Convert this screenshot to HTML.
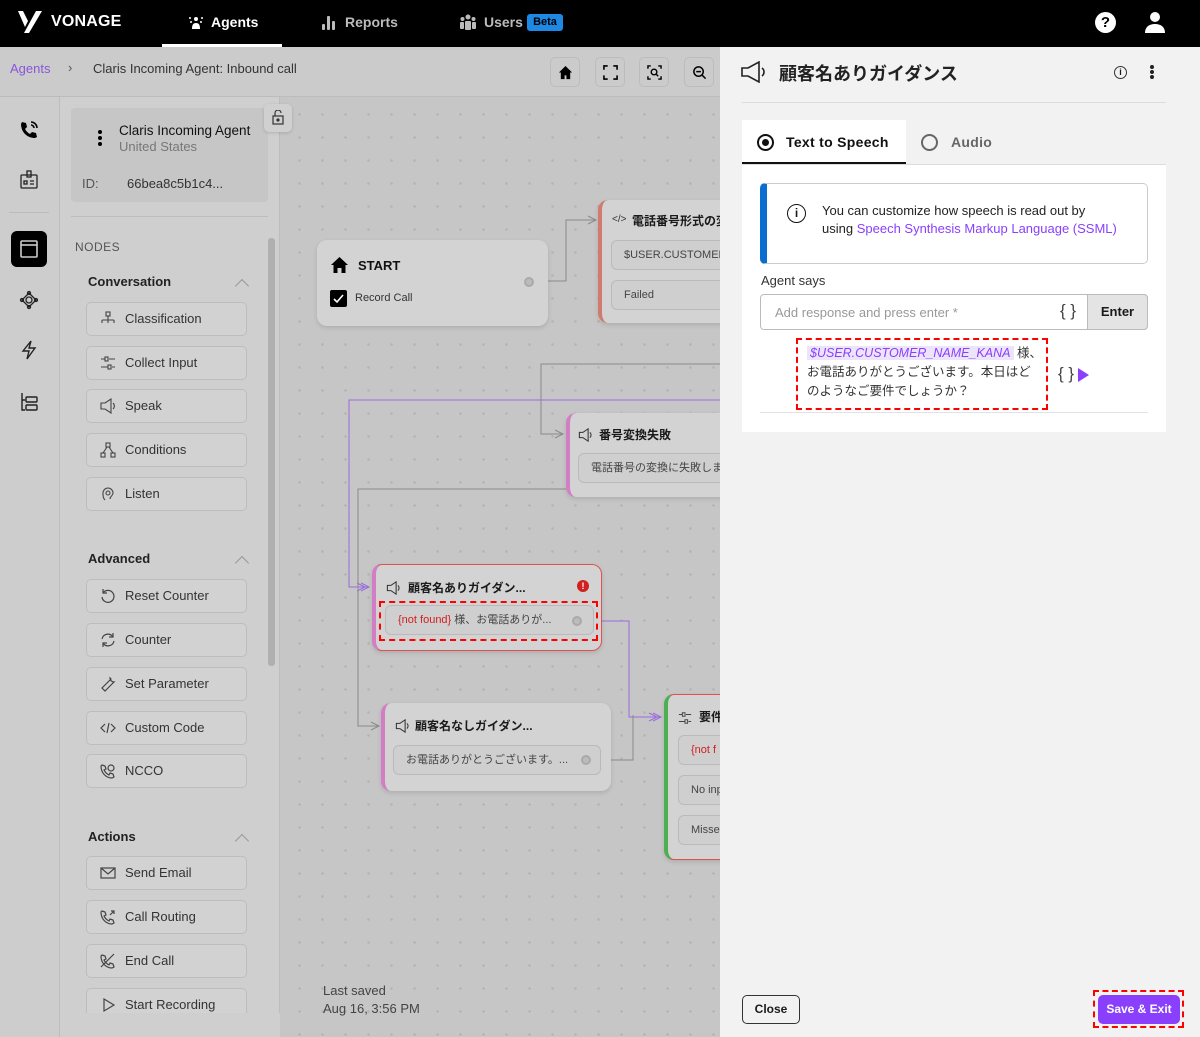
<!DOCTYPE html>
<html><head><meta charset="utf-8">
<style>
*{box-sizing:border-box;margin:0;padding:0}
body{width:1200px;height:1037px;overflow:hidden;position:relative;font-family:"Liberation Sans","Noto Sans CJK JP",sans-serif;background:#c6c6c6;color:#1a1a1a}
.a{position:absolute}
.hdr{left:0;top:0;width:1200px;height:47px;background:#000;color:#fff}
.bc{left:0;top:47px;width:720px;height:50px;background:#cbcbcb;border-bottom:1px solid #bcbcbc}
.rail{left:0;top:97px;width:60px;height:940px;background:#cdcdcd;border-right:1px solid #bdbdbd}
.side{left:60px;top:97px;width:220px;height:940px;background:#cfcfcf;border-right:1px solid #bdbdbd}
.canvas{left:280px;top:97px;width:440px;height:940px;background-color:#c6c6c6;background-image:radial-gradient(circle,#b2b2b2 1px,transparent 1.5px);background-size:23px 23px;background-position:8px 6px}
.nb{position:absolute;left:86px;width:161px;height:34px;border:1px solid #bdbdbd;border-radius:5px;background:#d2d2d2;font-size:13px;color:#333;padding-left:38px;line-height:32px}
.nb svg{position:absolute;left:13px;top:8px}
.sh{position:absolute;left:88px;font-size:13px;font-weight:bold;color:#222}
.chev{position:absolute;left:237px;width:10px;height:10px;border-left:1.5px solid #999;border-top:1.5px solid #999;transform:rotate(45deg)}
.node{position:absolute;background:#d3d3d3;border-radius:10px;box-shadow:0 2px 5px rgba(0,0,0,.12)}
.pill{position:absolute;background:#cfcfcf;border:1px solid #bababa;border-radius:6px;font-size:11px;color:#444;padding-left:12px;white-space:nowrap;overflow:hidden}
.tb{position:absolute;top:57px;width:30px;height:30px;border:1px solid #bcbcbc;border-radius:5px;background:#cbcbcb}
.panel{left:720px;top:47px;width:480px;height:990px;background:#f2f2f2}
</style></head><body>

<div class="a hdr">
  <svg class="a" style="left:17px;top:10px" width="26" height="24" viewBox="0 0 26 24"><path d="M1 1h5l5 10-3 6z" fill="#fff"/><path d="M19 1h6L12 23H7z" fill="#fff"/></svg>
  <div class="a" style="left:51px;top:13px;font-size:16px;font-weight:bold;letter-spacing:.2px">VONAGE</div>
  <svg class="a" style="left:188px;top:14px" width="16" height="16" viewBox="0 0 16 16" fill="#fff"><circle cx="8" cy="5" r="2"/><path d="M4 15c0-4 1-6 4-6s4 2 4 6z"/><circle cx="2" cy="4" r="1"/><circle cx="14" cy="4" r="1"/><circle cx="3" cy="8" r="1"/><circle cx="13" cy="8" r="1"/></svg>
  <div class="a" style="left:211px;top:14px;font-size:14px;font-weight:bold">Agents</div>
  <div class="a" style="left:162px;top:44px;width:120px;height:3px;background:#fff"></div>
  <svg class="a" style="left:321px;top:14px" width="16" height="16" viewBox="0 0 16 16" fill="#bbb"><rect x="1" y="10" width="3" height="6" rx="1"/><rect x="6" y="2" width="3" height="14" rx="1"/><rect x="11" y="7" width="3" height="9" rx="1"/></svg>
  <div class="a" style="left:345px;top:14px;font-size:14px;font-weight:bold;color:#bbb">Reports</div>
  <svg class="a" style="left:459px;top:13px" width="18" height="18" viewBox="0 0 18 18" fill="#bbb"><circle cx="9" cy="4" r="2.5"/><circle cx="3.5" cy="6" r="2"/><circle cx="14.5" cy="6" r="2"/><rect x="6" y="8" width="6" height="9" rx="1"/><rect x="1" y="9" width="4" height="7" rx="1"/><rect x="13" y="9" width="4" height="7" rx="1"/></svg>
  <div class="a" style="left:484px;top:14px;font-size:14px;font-weight:bold;color:#bbb">Users</div>
  <div class="a" style="left:527px;top:14px;width:36px;height:17px;background:#1e88e5;border-radius:3px;font-size:11px;font-weight:bold;color:#000;text-align:center;line-height:17px">Beta</div>
  <div class="a" style="left:1095px;top:12px;width:21px;height:21px;border-radius:50%;background:#fff;color:#000;font-size:15px;font-weight:bold;text-align:center;line-height:21px">?</div>
  <svg class="a" style="left:1144px;top:11px" width="22" height="22" viewBox="0 0 22 22" fill="#fff"><circle cx="11" cy="6" r="5"/><path d="M1 22c0-6 4-9 10-9s10 3 10 9z"/></svg>
</div>

<div class="a bc">
  <div class="a" style="left:10px;top:14px;font-size:13px;color:#8a55d8">Agents</div>
  <div class="a" style="left:68px;top:13px;font-size:13px;color:#555">›</div>
  <div class="a" style="left:93px;top:14px;font-size:13px;color:#333">Claris Incoming Agent: Inbound call</div>
</div>
<div class="tb" style="left:550px"><svg class="a" style="left:7px;top:7px" width="15" height="15" viewBox="0 0 16 16"><path d="M8 1L1 8h2v7h4v-4h2v4h4V8h2z" fill="#000"/></svg></div>
<div class="tb" style="left:595px"><svg class="a" style="left:7px;top:7px" width="15" height="15" viewBox="0 0 16 16" fill="none" stroke="#000" stroke-width="1.7"><path d="M1 5V1h4M11 1h4v4M15 11v4h-4M5 15H1v-4"/></svg></div>
<div class="tb" style="left:639px"><svg class="a" style="left:7px;top:7px" width="15" height="15" viewBox="0 0 16 16" fill="none" stroke="#000" stroke-width="1.5"><path d="M1 4V1h3M12 1h3v3M15 12v3h-3M4 15H1v-3"/><circle cx="7.5" cy="7.5" r="3"/><path d="M10 10l2 2"/></svg></div>
<div class="tb" style="left:684px"><svg class="a" style="left:7px;top:7px" width="15" height="15" viewBox="0 0 16 16" fill="none" stroke="#000" stroke-width="1.6"><circle cx="7" cy="7" r="5"/><path d="M4.5 7h5M11 11l3.5 3.5"/></svg></div>

<div class="a rail">
  <svg class="a" style="left:19px;top:23px" width="20" height="20" viewBox="0 0 20 20"><path d="M3 2l4 1 1 4-2 2c1 2 3 4 5 5l2-2 4 1 1 4-2 1C8 18 2 12 2 4z" fill="#000"/><path d="M12 2a6 6 0 0 1 6 6M12 5a3 3 0 0 1 3 3" stroke="#000" stroke-width="1.6" fill="none"/></svg>
  <svg class="a" style="left:19px;top:73px" width="20" height="20" viewBox="0 0 20 20" fill="none" stroke="#222" stroke-width="1.3"><rect x="2" y="5" width="16" height="13" rx="1"/><rect x="8" y="1" width="4" height="6"/><rect x="5" y="11" width="3" height="3"/><path d="M11 11h4M11 14h4"/></svg>
  <div class="a" style="left:9px;top:115px;width:40px;height:1px;background:#bbb"></div>
  <div class="a" style="left:11px;top:134px;width:36px;height:36px;background:#000;border-radius:6px"><svg class="a" style="left:9px;top:9px" width="18" height="18" viewBox="0 0 18 18" fill="none" stroke="#ccc" stroke-width="1.6"><rect x="1" y="1" width="16" height="16" rx="1"/><path d="M1 5h16"/></svg></div>
  <svg class="a" style="left:19px;top:193px" width="20" height="20" viewBox="0 0 20 20" fill="none" stroke="#222" stroke-width="1.3"><circle cx="10" cy="10" r="3"/><path d="M10 3l7 7-7 7-7-7z"/><circle cx="10" cy="3" r="1.5"/><circle cx="17" cy="10" r="1.5"/><circle cx="10" cy="17" r="1.5"/><circle cx="3" cy="10" r="1.5"/></svg>
  <svg class="a" style="left:20px;top:243px" width="18" height="20" viewBox="0 0 18 20" fill="none" stroke="#222" stroke-width="1.4"><path d="M11 1L3 11h6l-2 8 8-11H9z"/></svg>
  <svg class="a" style="left:19px;top:295px" width="20" height="20" viewBox="0 0 20 20" fill="none" stroke="#222" stroke-width="1.4"><path d="M3 1v17h3M3 8h3"/><rect x="7" y="5" width="11" height="5" rx="1"/><rect x="7" y="13" width="11" height="5" rx="1"/></svg>
</div>

<div class="a side">
  <div class="a" style="left:11px;top:11px;width:197px;height:94px;background:#c6c6c6;border-radius:4px"></div>
  <div class="a" style="left:38px;top:33px;width:4px;height:4px;border-radius:50%;background:#000;box-shadow:0 6px 0 #000,0 12px 0 #000"></div>
  <div class="a" style="left:59px;top:26px;font-size:13.5px;color:#111">Claris Incoming Agent</div>
  <div class="a" style="left:59px;top:42px;font-size:13px;color:#777">United States</div>
  <div class="a" style="left:22px;top:79px;font-size:13px;color:#555">ID:</div>
  <div class="a" style="left:67px;top:79px;font-size:13px;color:#333">66bea8c5b1c4...</div>
  <div class="a" style="left:11px;top:119px;width:197px;height:1px;background:#bdbdbd"></div>
  <div class="a" style="left:15px;top:143px;font-size:12px;color:#555;letter-spacing:.5px">NODES</div>
  <div class="a" style="left:208px;top:141px;width:7px;height:428px;background:#b0b0b0;border-radius:3px"></div>
</div>

<div class="sh" style="top:274px">Conversation</div><div class="chev" style="top:281px"></div>
<div class="nb" style="top:302px"><svg width="16" height="16" viewBox="0 0 16 16" fill="none" stroke="#444" stroke-width="1.1"><rect x="6" y="1" width="4" height="4"/><path d="M8 5v4M2 9h12M2 9v3M8 9v3M14 9v3"/></svg>Classification</div>
<div class="nb" style="top:346px"><svg width="16" height="16" viewBox="0 0 16 16" fill="none" stroke="#444" stroke-width="1.1"><path d="M1 4h4M9 4h6M1 12h7M12 12h3"/><rect x="5" y="2" width="3" height="4"/><rect x="8" y="10" width="3" height="4"/></svg>Collect Input</div>
<div class="nb" style="top:389px"><svg width="16" height="16" viewBox="0 0 16 16" fill="none" stroke="#444" stroke-width="1.1"><path d="M1 5h4l6-4v14l-6-4H1z"/><path d="M13 5a4 4 0 0 1 0 6"/></svg>Speak</div>
<div class="nb" style="top:433px"><svg width="16" height="16" viewBox="0 0 16 16" fill="none" stroke="#444" stroke-width="1.1"><rect x="6" y="1" width="4" height="4"/><path d="M7 5l-4 6M9 5l4 6"/><rect x="1" y="11" width="4" height="4"/><rect x="11" y="11" width="4" height="4"/></svg>Conditions</div>
<div class="nb" style="top:477px"><svg width="16" height="16" viewBox="0 0 16 16" fill="none" stroke="#444" stroke-width="1.1"><path d="M5 14c-2-2-2-4-2-7a5 5 0 0 1 10 0c0 3-3 3-3 6"/><circle cx="8" cy="7" r="2"/></svg>Listen</div>

<div class="sh" style="top:551px">Advanced</div><div class="chev" style="top:558px"></div>
<div class="nb" style="top:579px"><svg width="16" height="16" viewBox="0 0 16 16" fill="none" stroke="#444" stroke-width="1.2"><path d="M3 5a6 6 0 1 1-1 4"/><path d="M3 1v4h4"/></svg>Reset Counter</div>
<div class="nb" style="top:623px"><svg width="16" height="16" viewBox="0 0 16 16" fill="none" stroke="#444" stroke-width="1.2"><path d="M13 5a6 6 0 0 0-11 2M3 11a6 6 0 0 0 11-2"/><path d="M13 1v4h-4M3 15v-4h4"/></svg>Counter</div>
<div class="nb" style="top:667px"><svg width="16" height="16" viewBox="0 0 16 16" fill="none" stroke="#444" stroke-width="1.2"><path d="M10 2a4 4 0 0 0 4 4l-3 3-6 6-3-3 6-6 3-3z"/></svg>Set Parameter</div>
<div class="nb" style="top:711px"><svg width="16" height="16" viewBox="0 0 16 16" fill="none" stroke="#444" stroke-width="1.2"><path d="M5 4L1 8l4 4M11 4l4 4-4 4M9 3l-2 10"/></svg>Custom Code</div>
<div class="nb" style="top:754px"><svg width="16" height="16" viewBox="0 0 16 16" fill="none" stroke="#444" stroke-width="1.2"><path d="M2 2l3 1 1 3-2 1c1 2 3 4 5 5l1-2 3 1 1 3-2 1C6 15 1 10 1 3z"/><circle cx="11" cy="5" r="3"/></svg>NCCO</div>

<div class="sh" style="top:829px">Actions</div><div class="chev" style="top:836px"></div>
<div class="nb" style="top:856px"><svg width="16" height="16" viewBox="0 0 16 16" fill="none" stroke="#444" stroke-width="1.2"><rect x="1" y="3" width="14" height="10"/><path d="M1 3l7 6 7-6"/></svg>Send Email</div>
<div class="nb" style="top:900px"><svg width="16" height="16" viewBox="0 0 16 16" fill="none" stroke="#444" stroke-width="1.2"><path d="M2 2l3 1 1 3-2 1c1 2 3 4 5 5l1-2 3 1 1 3-2 1C6 15 1 10 1 3z"/><path d="M10 6l4-4M11 2h3v3"/></svg>Call Routing</div>
<div class="nb" style="top:944px"><svg width="16" height="16" viewBox="0 0 16 16" fill="none" stroke="#444" stroke-width="1.2"><path d="M2 2l3 1 1 3-2 1c1 2 3 4 5 5l1-2 3 1 1 3-2 1C6 15 1 10 1 3z"/><path d="M1 14L14 1"/></svg>End Call</div>
<div class="nb" style="top:988px;height:26px;border-bottom:none;border-radius:5px 5px 0 0"><svg width="16" height="16" viewBox="0 0 16 16" fill="none" stroke="#444" stroke-width="1.2"><path d="M4 2l10 6-10 6z"/></svg>Start Recording</div>
<div class="a" style="left:60px;top:1013px;width:220px;height:24px;background:#cfcfcf"></div>

<div class="a canvas"></div>
<div class="a" style="left:264px;top:104px;width:28px;height:28px;background:#d0d0d0;border-radius:5px;box-shadow:0 1px 3px rgba(0,0,0,.15);z-index:2"><svg class="a" style="left:8px;top:6px" width="12" height="15" viewBox="0 0 12 15" fill="none" stroke="#333" stroke-width="1.2"><rect x="1" y="6" width="10" height="8"/><path d="M3 6V3a3 3 0 0 1 6 0"/><circle cx="6" cy="10" r="1" fill="#333"/></svg></div>
<svg class="a" style="left:280px;top:97px" width="440" height="940" viewBox="280 97 440 940" fill="none">
  <path d="M548 281h18v-61h30" stroke="#8a8a8a" stroke-width="1"/><path d="M588 216l8 4-8 4" stroke="#8a8a8a"/>
  <path d="M720 364H541v70h22" stroke="#8a8a8a"/><path d="M555 430l8 4-8 4" stroke="#8a8a8a"/>
  <path d="M720 400H349v187h20" stroke="#9a6ae0"/><path d="M361 583l8 4-8 4M357 583l8 4-8 4" stroke="#9a6ae0"/>
  <path d="M566 489H358v237h21" stroke="#8a8a8a"/><path d="M371 722l8 4-8 4" stroke="#8a8a8a"/>
  <path d="M598 621h31v96h32" stroke="#9a6ae0"/><path d="M653 713l8 4-8 4M649 713l8 4-8 4" stroke="#9a6ae0"/>
  <path d="M611 760h22v-45" stroke="#8a8a8a"/>
</svg>

<!-- START node -->
<div class="node" style="left:317px;top:240px;width:231px;height:86px">
  <svg class="a" style="left:13px;top:16px" width="19" height="18" viewBox="0 0 19 18"><path d="M9.5 1L1 9h2.5v8h4v-5h4v5h4V9H18z" fill="#000"/></svg>
  <div class="a" style="left:41px;top:18px;font-size:13px;font-weight:bold;color:#111">START</div>
  <div class="a" style="left:13px;top:50px;width:17px;height:17px;background:#000;border-radius:2px"><svg class="a" style="left:3px;top:3px" width="11" height="11" viewBox="0 0 11 11"><path d="M1 6l3 3 6-7" stroke="#fff" stroke-width="1.6" fill="none"/></svg></div>
  <div class="a" style="left:38px;top:52px;font-size:11px;color:#333">Record Call</div>
  <div class="a" style="left:207px;top:37px;width:10px;height:10px;border-radius:50%;border:2px solid #aaa;background:#bbb"></div>
</div>
<!-- top right code node -->
<div class="node" style="left:598px;top:200px;width:140px;height:123px;border-left:4px solid #d07a70;border-radius:10px 0 0 10px">
  <div class="a" style="left:10px;top:14px;font-size:10px;color:#333">&lt;/&gt;</div>
  <div class="a" style="left:30px;top:12px;font-size:12px;font-weight:bold;white-space:nowrap">電話番号形式の変</div>
  <div class="pill" style="left:9px;top:40px;width:130px;height:30px;line-height:28px">$USER.CUSTOMER_</div>
  <div class="pill" style="left:9px;top:80px;width:130px;height:30px;line-height:28px">Failed</div>
</div>
<!-- 番号変換失敗 -->
<div class="node" style="left:566px;top:413px;width:170px;height:84px;border-left:4px solid #d17ec4;border-radius:10px 0 0 10px">
  <svg class="a" style="left:8px;top:15px" width="15" height="14" viewBox="0 0 16 16" fill="none" stroke="#333" stroke-width="1.2"><path d="M1 5h4l6-4v14l-6-4H1z"/><path d="M13 5a4 4 0 0 1 0 6"/></svg>
  <div class="a" style="left:29px;top:13px;font-size:12px;font-weight:bold">番号変換失敗</div>
  <div class="pill" style="left:8px;top:40px;width:160px;height:30px;line-height:28px">電話番号の変換に失敗しま</div>
</div>
<!-- 顧客名あり -->
<div class="node" style="left:372px;top:564px;width:230px;height:87px;border:1.5px solid #e05050;border-left:4px solid #d17ec4">
  <svg class="a" style="left:10px;top:16px" width="15" height="14" viewBox="0 0 16 16" fill="none" stroke="#333" stroke-width="1.2"><path d="M1 5h4l6-4v14l-6-4H1z"/><path d="M13 5a4 4 0 0 1 0 6"/></svg>
  <div class="a" style="left:32px;top:14px;font-size:12px;font-weight:bold">顧客名ありガイダン...</div>
  <div class="a" style="left:201px;top:15px;width:12px;height:12px;border-radius:50%;background:#d02020;color:#fff;font-size:9px;font-weight:bold;text-align:center;line-height:12px">!</div>
  <div class="a" style="left:3px;top:36px;width:219px;height:40px;border:2px dashed #f00"></div>
  <div class="pill" style="left:9px;top:40px;width:209px;height:30px;line-height:28px"><span style="color:#d02020">{not found}</span> 様、お電話ありが...</div>
  <div class="a" style="left:196px;top:51px;width:10px;height:10px;border-radius:50%;border:2px solid #aaa;background:#bbb"></div>
</div>
<!-- 顧客名なし -->
<div class="node" style="left:381px;top:703px;width:230px;height:88px;border-left:4px solid #d17ec4">
  <svg class="a" style="left:10px;top:16px" width="15" height="14" viewBox="0 0 16 16" fill="none" stroke="#333" stroke-width="1.2"><path d="M1 5h4l6-4v14l-6-4H1z"/><path d="M13 5a4 4 0 0 1 0 6"/></svg>
  <div class="a" style="left:30px;top:14px;font-size:12px;font-weight:bold">顧客名なしガイダン...</div>
  <div class="pill" style="left:8px;top:42px;width:208px;height:30px;line-height:28px">お電話ありがとうございます。...</div>
  <div class="a" style="left:196px;top:52px;width:10px;height:10px;border-radius:50%;border:2px solid #aaa;background:#bbb"></div>
</div>
<!-- 要件 -->
<div class="node" style="left:664px;top:694px;width:80px;height:166px;border:1.5px solid #e05050;border-left:4px solid #4caf50;border-radius:10px 0 0 10px">
  <svg class="a" style="left:10px;top:16px" width="14" height="14" viewBox="0 0 16 16" fill="none" stroke="#444" stroke-width="1.1"><path d="M1 4h4M9 4h6M1 12h7M12 12h3"/><rect x="5" y="2" width="3" height="4"/><rect x="8" y="10" width="3" height="4"/></svg>
  <div class="a" style="left:31px;top:13px;font-size:12px;font-weight:bold">要件</div>
  <div class="pill" style="left:10px;top:40px;width:70px;height:30px;line-height:28px;color:#d02020">{not f</div>
  <div class="pill" style="left:10px;top:80px;width:70px;height:30px;line-height:28px">No inp</div>
  <div class="pill" style="left:10px;top:120px;width:70px;height:30px;line-height:28px">Misse</div>
</div>
<div class="a" style="left:323px;top:982px;font-size:13px;color:#444;line-height:18px">Last saved<br>Aug 16, 3:56 PM</div>

<!-- Right panel -->
<div class="a panel">
  <svg class="a" style="left:21px;top:14px" width="26" height="22" viewBox="0 0 26 22" fill="none" stroke="#222" stroke-width="1.6"><path d="M1 7h6l11-6v20L7 15H1z"/><path d="M21 7a5 5 0 0 1 0 8"/></svg>
  <div class="a" style="left:59px;top:13px;font-size:18px;font-weight:bold;color:#222">顧客名ありガイダンス</div>
  <div class="a" style="left:394px;top:19px;width:13px;height:13px;border:1.3px solid #333;border-radius:50%;font-size:9px;text-align:center;line-height:11px;font-weight:bold">i</div>
  <div class="a" style="left:430px;top:18px;width:4px;height:4px;border-radius:50%;background:#222;box-shadow:0 5px 0 #222,0 10px 0 #222"></div>
  <div class="a" style="left:22px;top:55px;width:424px;height:1px;background:#ddd"></div>
  <div class="a" style="left:22px;top:73px;width:164px;height:44px;background:#fff;border-bottom:2px solid #111"></div>
  <div class="a" style="left:37px;top:87px;width:17px;height:17px;border:2px solid #111;border-radius:50%"><div class="a" style="left:3px;top:3px;width:7px;height:7px;border-radius:50%;background:#111"></div></div>
  <div class="a" style="left:66px;top:87px;font-size:14px;font-weight:bold;color:#111;letter-spacing:.3px">Text to Speech</div>
  <div class="a" style="left:201px;top:87px;width:17px;height:17px;border:2px solid #666;border-radius:50%"></div>
  <div class="a" style="left:231px;top:87px;font-size:14px;font-weight:bold;color:#666;letter-spacing:.3px">Audio</div>
  <div class="a" style="left:22px;top:117px;width:424px;height:268px;background:#fff;border-top:1px solid #ddd"></div>
  <div class="a" style="left:40px;top:136px;width:388px;height:81px;border:1px solid #ccc;border-left:7px solid #0a6ed1;border-radius:5px;background:#fff"></div>
  <div class="a" style="left:67px;top:157px;width:19px;height:19px;border:1.6px solid #111;border-radius:50%;font-size:12px;font-weight:bold;text-align:center;line-height:16px">i</div>
  <div class="a" style="left:102px;top:155px;font-size:13px;color:#222;line-height:18px;white-space:nowrap">You can customize how speech is read out by<br>using <span style="color:#8a3ffc">Speech Synthesis Markup Language (SSML)</span></div>
  <div class="a" style="left:41px;top:226px;font-size:13px;color:#333">Agent says</div>
  <div class="a" style="left:40px;top:247px;width:388px;height:36px;border:1px solid #bbb;border-radius:4px;background:#fff"></div>
  <div class="a" style="left:367px;top:247px;width:61px;height:36px;border:1px solid #bbb;border-radius:0 4px 4px 0;background:#e4e4e4;font-size:13px;font-weight:bold;text-align:center;line-height:34px">Enter</div>
  <div class="a" style="left:55px;top:258px;font-size:13px;color:#999">Add response and press enter *</div>
  <div class="a" style="left:340px;top:254px;font-size:17px;color:#444">{ }</div>
  <div class="a" style="left:76px;top:291px;width:252px;height:72px;border:2px dashed #f00"></div>
  <div class="a" style="left:87px;top:297px;width:240px;font-size:12.5px;color:#333;line-height:19px;white-space:nowrap"><span style="background:#ece4fb;color:#8a3ffc;font-style:italic;padding:0 3px">$USER.CUSTOMER_NAME_KANA</span> 様、<br>お電話ありがとうございます。本日はど<br>のようなご要件でしょうか？</div>
  <div class="a" style="left:338px;top:317px;font-size:17px;color:#444">{ }</div>
  <svg class="a" style="left:358px;top:321px" width="11" height="14" viewBox="0 0 11 14"><path d="M0 0l11 7-11 7z" fill="#8a3ffc"/></svg>
  <div class="a" style="left:40px;top:365px;width:388px;height:1px;background:#e2e2e2"></div>
  <div class="a" style="left:22px;top:948px;width:58px;height:29px;border:1px solid #333;border-radius:5px;font-size:12px;font-weight:bold;text-align:center;line-height:27px">Close</div>
  <div class="a" style="left:373px;top:943px;width:91px;height:38px;border:2px dashed #f00"></div>
  <div class="a" style="left:378px;top:948px;width:82px;height:29px;background:#8a3ffc;border-radius:5px;color:#fff;font-size:12px;font-weight:bold;text-align:center;line-height:29px">Save &amp; Exit</div>
</div>
</body></html>
